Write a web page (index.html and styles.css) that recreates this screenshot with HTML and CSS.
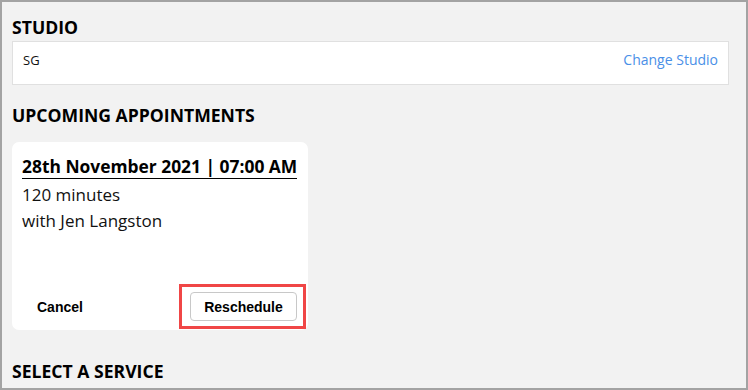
FILE: index.html
```html
<!DOCTYPE html>
<html>
<head>
<meta charset="utf-8">
<link rel="stylesheet" href="styles.css">
</head>
<body>
<div class="page">
  <h2 class="heading heading-studio">STUDIO</h2>
  <div class="studio-box">
    <span class="studio-name">SG</span>
    <a class="studio-change" href="#">Change Studio</a>
  </div>
  <h2 class="heading heading-upcoming">UPCOMING APPOINTMENTS</h2>
  <div class="card">
    <div class="card-body">
      <div class="appt-date">28th November 2021 | 07:00 AM</div>
      <div class="appt-line">120 minutes</div>
      <div class="appt-line">with Jen Langston</div>
    </div>
    <div class="card-foot">
      <button class="btn-plain">Cancel</button>
      <div class="highlight">
        <button class="btn-outline">Reschedule</button>
      </div>
    </div>
  </div>
  <h2 class="heading heading-service">SELECT A SERVICE</h2>
</div>
</body>
</html>
```
FILE: styles.css
```css
html, body {
  margin: 0;
  padding: 0;
}
body {
  background: #f2f2f2;
  font-family: "Open Sans", "Noto Sans", sans-serif;
  color: #000;
}
.page {
  box-sizing: border-box;
  width: 748px;
  height: 390px;
  border: 2px solid #a3a3a3;
  background: #f2f2f2;
  padding: 13px 17px 0 10px;
  overflow: hidden;
}
.heading {
  margin: 0;
  font-size: 17.6px;
  line-height: 24px;
  font-weight: 700;
  color: #000;
}
.heading-studio {
  margin-bottom: 2px;
}
.studio-box {
  box-sizing: border-box;
  height: 44px;
  background: #fff;
  border: 1px solid #e0e0e0;
  padding: 8px 10px 0 10px;
  display: flex;
  align-items: baseline;
  justify-content: space-between;
}
.studio-name {
  font-size: 13px;
  color: #111;
}
.studio-change {
  font-size: 14px;
  color: #4a8fe7;
  text-decoration: none;
}
.heading-upcoming {
  margin-top: 18px;
  margin-bottom: 15px;
}
.card {
  box-sizing: border-box;
  width: 296px;
  height: 188px;
  background: #fff;
  border-radius: 7px;
  padding-bottom: 1px;
  display: flex;
  flex-direction: column;
  justify-content: space-between;
}
.card-body {
  padding: 12.5px 8px 0 10px;
}
.appt-date {
  display: inline-block;
  white-space: nowrap;
  font-size: 17.4px;
  font-weight: 700;
  line-height: 23px;
  border-bottom: 1px solid #000;
  margin-bottom: 3.5px;
}
.appt-line {
  font-size: 17px;
  line-height: 26px;
  color: #111;
}
.card-foot {
  display: flex;
  align-items: center;
  justify-content: space-between;
  padding: 0 2px 0 25px;
}
.btn-plain,
.btn-outline {
  font-family: "Liberation Sans", Arial, sans-serif;
  font-size: 14px;
  font-weight: 700;
  color: #000;
  height: 29px;
  background: #fff;
  cursor: pointer;
}
.btn-plain {
  border: none;
  padding: 0;
}
.btn-outline {
  box-sizing: border-box;
  width: 107px;
  border: 1px solid #c8c8c8;
  border-radius: 4px;
  padding: 0;
  display: block;
}
.highlight {
  border: 3px solid #f04646;
  padding: 5px 6px 5px 8px;
}
.heading-service {
  margin-top: 29px;
}
```
